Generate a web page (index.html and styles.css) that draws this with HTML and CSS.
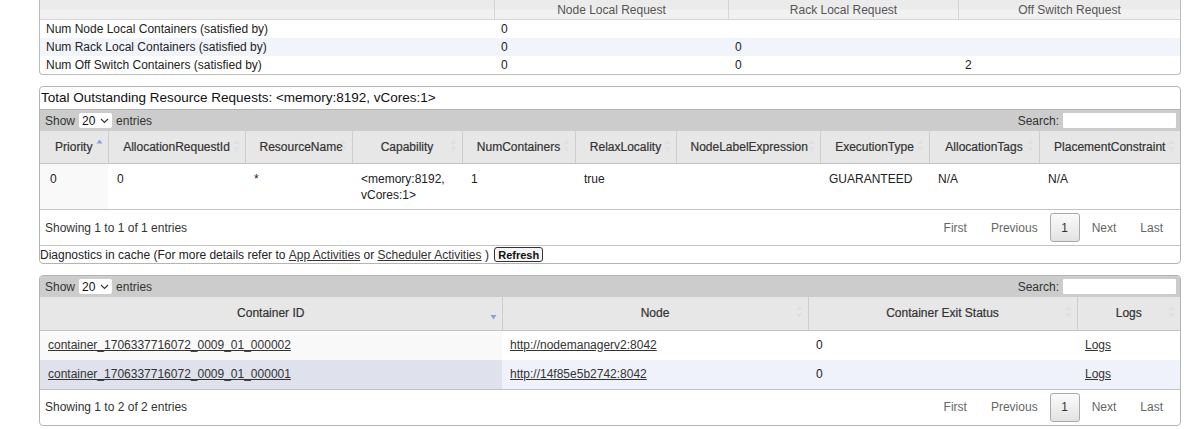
FILE: index.html
```html
<!DOCTYPE html>
<html>
<head>
<meta charset="utf-8">
<title>Application Attempt</title>
<link rel="stylesheet" href="styles.css">
</head>
<body>
<div class="page">
  <table class="info">
    <colgroup><col class="ic1"><col class="ic2"><col class="ic3"><col></colgroup>
    <thead>
      <tr><th></th><th>Node Local Request</th><th>Rack Local Request</th><th>Off Switch Request</th></tr>
    </thead>
    <tbody>
      <tr><td>Num Node Local Containers (satisfied by)</td><td>0</td><td></td><td></td></tr>
      <tr class="alt"><td>Num Rack Local Containers (satisfied by)</td><td>0</td><td>0</td><td></td></tr>
      <tr><td>Num Off Switch Containers (satisfied by)</td><td>0</td><td>0</td><td>2</td></tr>
    </tbody>
  </table>

  <div class="box">
    <div class="box-title">Total Outstanding Resource Requests: &lt;memory:8192, vCores:1&gt;</div>
    <div class="dt">
      <div class="toolbar">
        <div class="length">Show <span class="select">20<svg width="9" height="6" viewBox="0 0 9 6"><path d="M1 1l3.5 3.5L8 1" fill="none" stroke="#333" stroke-width="1.1"/></svg></span> entries</div>
        <div class="filter">Search: <span class="search"></span></div>
      </div>
      <table class="grid req">
        <colgroup>
          <col style="width:68px"><col style="width:137px"><col style="width:107px"><col style="width:110px"><col style="width:113px"><col style="width:101px"><col style="width:144px"><col style="width:109px"><col style="width:110px"><col>
        </colgroup>
        <thead>
          <tr>
            <th>Priority<svg class="sort" width="7" height="13" viewBox="0 0 7 13"><path d="M3.5 0.5L6.5 4.5H0.5Z" fill="#8d9fdc"/></svg></th>
            <th>AllocationRequestId<svg class="sort" width="7" height="13" viewBox="0 0 7 13"><path d="M3.5 0.5L6.5 5H0.5Z M3.5 12.5L6.5 8H0.5Z" fill="#e0e0e0"/></svg></th>
            <th>ResourceName<svg class="sort" width="7" height="13" viewBox="0 0 7 13"><path d="M3.5 0.5L6.5 5H0.5Z M3.5 12.5L6.5 8H0.5Z" fill="#e0e0e0"/></svg></th>
            <th>Capability<svg class="sort" width="7" height="13" viewBox="0 0 7 13"><path d="M3.5 0.5L6.5 5H0.5Z M3.5 12.5L6.5 8H0.5Z" fill="#e0e0e0"/></svg></th>
            <th>NumContainers<svg class="sort" width="7" height="13" viewBox="0 0 7 13"><path d="M3.5 0.5L6.5 5H0.5Z M3.5 12.5L6.5 8H0.5Z" fill="#e0e0e0"/></svg></th>
            <th>RelaxLocality<svg class="sort" width="7" height="13" viewBox="0 0 7 13"><path d="M3.5 0.5L6.5 5H0.5Z M3.5 12.5L6.5 8H0.5Z" fill="#e0e0e0"/></svg></th>
            <th>NodeLabelExpression<svg class="sort" width="7" height="13" viewBox="0 0 7 13"><path d="M3.5 0.5L6.5 5H0.5Z M3.5 12.5L6.5 8H0.5Z" fill="#e0e0e0"/></svg></th>
            <th>ExecutionType<svg class="sort" width="7" height="13" viewBox="0 0 7 13"><path d="M3.5 0.5L6.5 5H0.5Z M3.5 12.5L6.5 8H0.5Z" fill="#e0e0e0"/></svg></th>
            <th>AllocationTags<svg class="sort" width="7" height="13" viewBox="0 0 7 13"><path d="M3.5 0.5L6.5 5H0.5Z M3.5 12.5L6.5 8H0.5Z" fill="#e0e0e0"/></svg></th>
            <th>PlacementConstraint<svg class="sort" width="7" height="13" viewBox="0 0 7 13"><path d="M3.5 0.5L6.5 5H0.5Z M3.5 12.5L6.5 8H0.5Z" fill="#e0e0e0"/></svg></th>
          </tr>
        </thead>
        <tbody>
          <tr class="odd">
            <td class="sorted">0</td><td>0</td><td>*</td><td>&lt;memory:8192, vCores:1&gt;</td><td>1</td><td>true</td><td></td><td>GUARANTEED</td><td>N/A</td><td>N/A</td>
          </tr>
        </tbody>
      </table>
      <div class="dt-footer">
        <div class="info-text">Showing 1 to 1 of 1 entries</div>
        <div class="paging">
          <span class="pg">First</span><span class="pg">Previous</span><span class="pg-btn">1</span><span class="pg">Next</span><span class="pg">Last</span>
        </div>
      </div>
    </div>
    <div class="diag">Diagnostics in cache (For more details refer to <a href="#">App Activities</a> or <a href="#">Scheduler Activities</a> ) <button class="refresh">Refresh</button></div>
  </div>

  <div class="box box-containers">
    <div class="dt">
      <div class="toolbar">
        <div class="length">Show <span class="select">20<svg width="9" height="6" viewBox="0 0 9 6"><path d="M1 1l3.5 3.5L8 1" fill="none" stroke="#333" stroke-width="1.1"/></svg></span> entries</div>
        <div class="filter">Search: <span class="search"></span></div>
      </div>
      <table class="grid cont">
        <colgroup><col style="width:462px"><col style="width:306px"><col style="width:269px"><col></colgroup>
        <thead>
          <tr>
            <th>Container ID<svg class="sort down" width="7" height="13" viewBox="0 0 7 13"><path d="M3.5 12.5L6.5 8H0.5Z" fill="#8d9fdc"/></svg></th>
            <th>Node<svg class="sort" width="7" height="13" viewBox="0 0 7 13"><path d="M3.5 0.5L6.5 5H0.5Z M3.5 12.5L6.5 8H0.5Z" fill="#e0e0e0"/></svg></th>
            <th>Container Exit Status<svg class="sort" width="7" height="13" viewBox="0 0 7 13"><path d="M3.5 0.5L6.5 5H0.5Z M3.5 12.5L6.5 8H0.5Z" fill="#e0e0e0"/></svg></th>
            <th>Logs<svg class="sort" width="7" height="13" viewBox="0 0 7 13"><path d="M3.5 0.5L6.5 5H0.5Z M3.5 12.5L6.5 8H0.5Z" fill="#e0e0e0"/></svg></th>
          </tr>
        </thead>
        <tbody>
          <tr class="odd"><td class="sorted"><a href="#">container_1706337716072_0009_01_000002</a></td><td><a href="#">http://nodemanagerv2:8042</a></td><td>0</td><td><a href="#">Logs</a></td></tr>
          <tr class="even"><td class="sorted"><a href="#">container_1706337716072_0009_01_000001</a></td><td><a href="#">http://14f85e5b2742:8042</a></td><td>0</td><td><a href="#">Logs</a></td></tr>
        </tbody>
      </table>
      <div class="dt-footer">
        <div class="info-text">Showing 1 to 2 of 2 entries</div>
        <div class="paging">
          <span class="pg">First</span><span class="pg">Previous</span><span class="pg-btn">1</span><span class="pg">Next</span><span class="pg">Last</span>
        </div>
      </div>
    </div>
  </div>
</div>
</body>
</html>
```

FILE: styles.css
```css
* { box-sizing: border-box; }

body {
  margin: 0;
  background: #fff;
  color: #222;
  font-family: "Liberation Sans", Arial, Helvetica, sans-serif;
  font-size: 12px;
}

.page {
  padding: 0 3px 0 39px;
}

/* top info table */
.info {
  width: 100%;
  border-collapse: separate;
  border-spacing: 0;
  table-layout: fixed;
  border: 1px solid #bcbcbc;
  border-top: none;
  border-radius: 0 0 4px 4px;
}
.info .ic1 { width: 454px; }
.info .ic2 { width: 234px; }
.info .ic3 { width: 230px; }

.info th {
  height: 20px;
  padding: 0;
  font-weight: normal;
  color: #555;
  text-align: center;
  background: linear-gradient(#ebebeb 0, #ebebeb 45%, #f1f1f1 55%, #f1f1f1 100%);
  border-bottom: 1px solid #d6d6d6;
}
.info th + th { border-left: 1px solid #d6d6d6; }

.info td {
  height: 18px;
  padding: 0 7px;
  line-height: 18px;
  color: #222;
}
.info td:first-child { padding-left: 6px; }
.info tr.alt td { background: #f2f4fc; }

/* boxes */
.box {
  margin-top: 11px;
  border: 1px solid #b4b4b4;
  border-radius: 4px;
  overflow: hidden;
}
.box-containers { margin-top: 11px; }

.box-title {
  height: 23px;
  line-height: 22px;
  font-size: 13.5px;
  padding: 0 1px;
  color: #111;
  border-bottom: 1px solid #b4b4b4;
}

.toolbar {
  height: 21px;
  background: #cccccc;
  display: flex;
  align-items: center;
  justify-content: space-between;
  padding: 0 4px 0 5px;
  color: #333;
}
.length, .filter {
  display: flex;
  align-items: center;
  gap: 4px;
}
.select {
  display: inline-flex;
  align-items: center;
  justify-content: space-between;
  width: 33px;
  height: 15px;
  padding: 0 3px;
  background: #fff;
  border-radius: 2px;
  color: #111;
}
.search {
  display: inline-block;
  width: 113px;
  height: 15px;
  background: #fff;
  border-radius: 1px;
}

/* data grids */
.grid {
  width: 100%;
  border-collapse: collapse;
  table-layout: fixed;
}
.grid th {
  position: relative;
  padding: 0 14px;
  font-weight: normal;
  -webkit-text-stroke: 0.2px #333;
  color: #333;
  text-align: center;
  background: #e7e7e7;
  border-right: 1px solid #cdcdcd;
  border-bottom: 1px solid #c4c4c4;
  white-space: nowrap;
}
.grid th:last-child { border-right: none; }
.req th { height: 32px; }
.cont th { height: 33px; }

.sort {
  position: absolute;
  right: 5px;
  top: 50%;
  margin-top: -8px;
}
.sort.down { margin-top: -6px; right: 5px; }

.grid td {
  padding: 0 9px;
  color: #222;
  vertical-align: top;
}
.req td {
  height: 46px;
  padding-top: 7px;
  line-height: 16px;
}
.req td:first-child { padding-left: 10px; }
.cont td {
  height: 29px;
  line-height: 29px;
  padding-left: 8px;
}
.grid tr.odd td { background: #fff; }
.grid tr.odd td.sorted { background: #f9f9f9; }
.grid tr.even td { background: #eff2fb; }
.grid tr.even td.sorted { background: #dfe2ed; }

.grid a, .diag a {
  color: #333;
  text-decoration: underline;
}

.dt-footer {
  height: 37px;
  display: flex;
  align-items: center;
  justify-content: space-between;
  padding: 0 5px;
  border-top: 1px solid #c4c4c4;
  color: #333;
}
.req + .dt-footer { border-bottom: 1px solid #c4c4c4; }
.cont + .dt-footer { height: 36px; }

.paging {
  display: flex;
  align-items: center;
  color: #666;
}
.pg { padding: 0 12px; }
.pg-btn {
  width: 30px;
  height: 29px;
  display: flex;
  align-items: center;
  justify-content: center;
  border: 1px solid #aaa;
  border-radius: 3px;
  background: linear-gradient(#fbfbfb, #e2e2e2);
  color: #333;
}

.diag {
  height: 17px;
  display: flex;
  align-items: center;
  color: #222;
  white-space: pre;
}
.refresh {
  margin-left: 2px;
  height: 15px;
  padding: 0 3px;
  font-family: "Liberation Sans", Arial, sans-serif;
  font-size: 11px;
  font-weight: bold;
  color: #111;
  background: #f6f6f6;
  border: 1px solid #333;
  border-radius: 3px;
  line-height: 12px;
}
```
